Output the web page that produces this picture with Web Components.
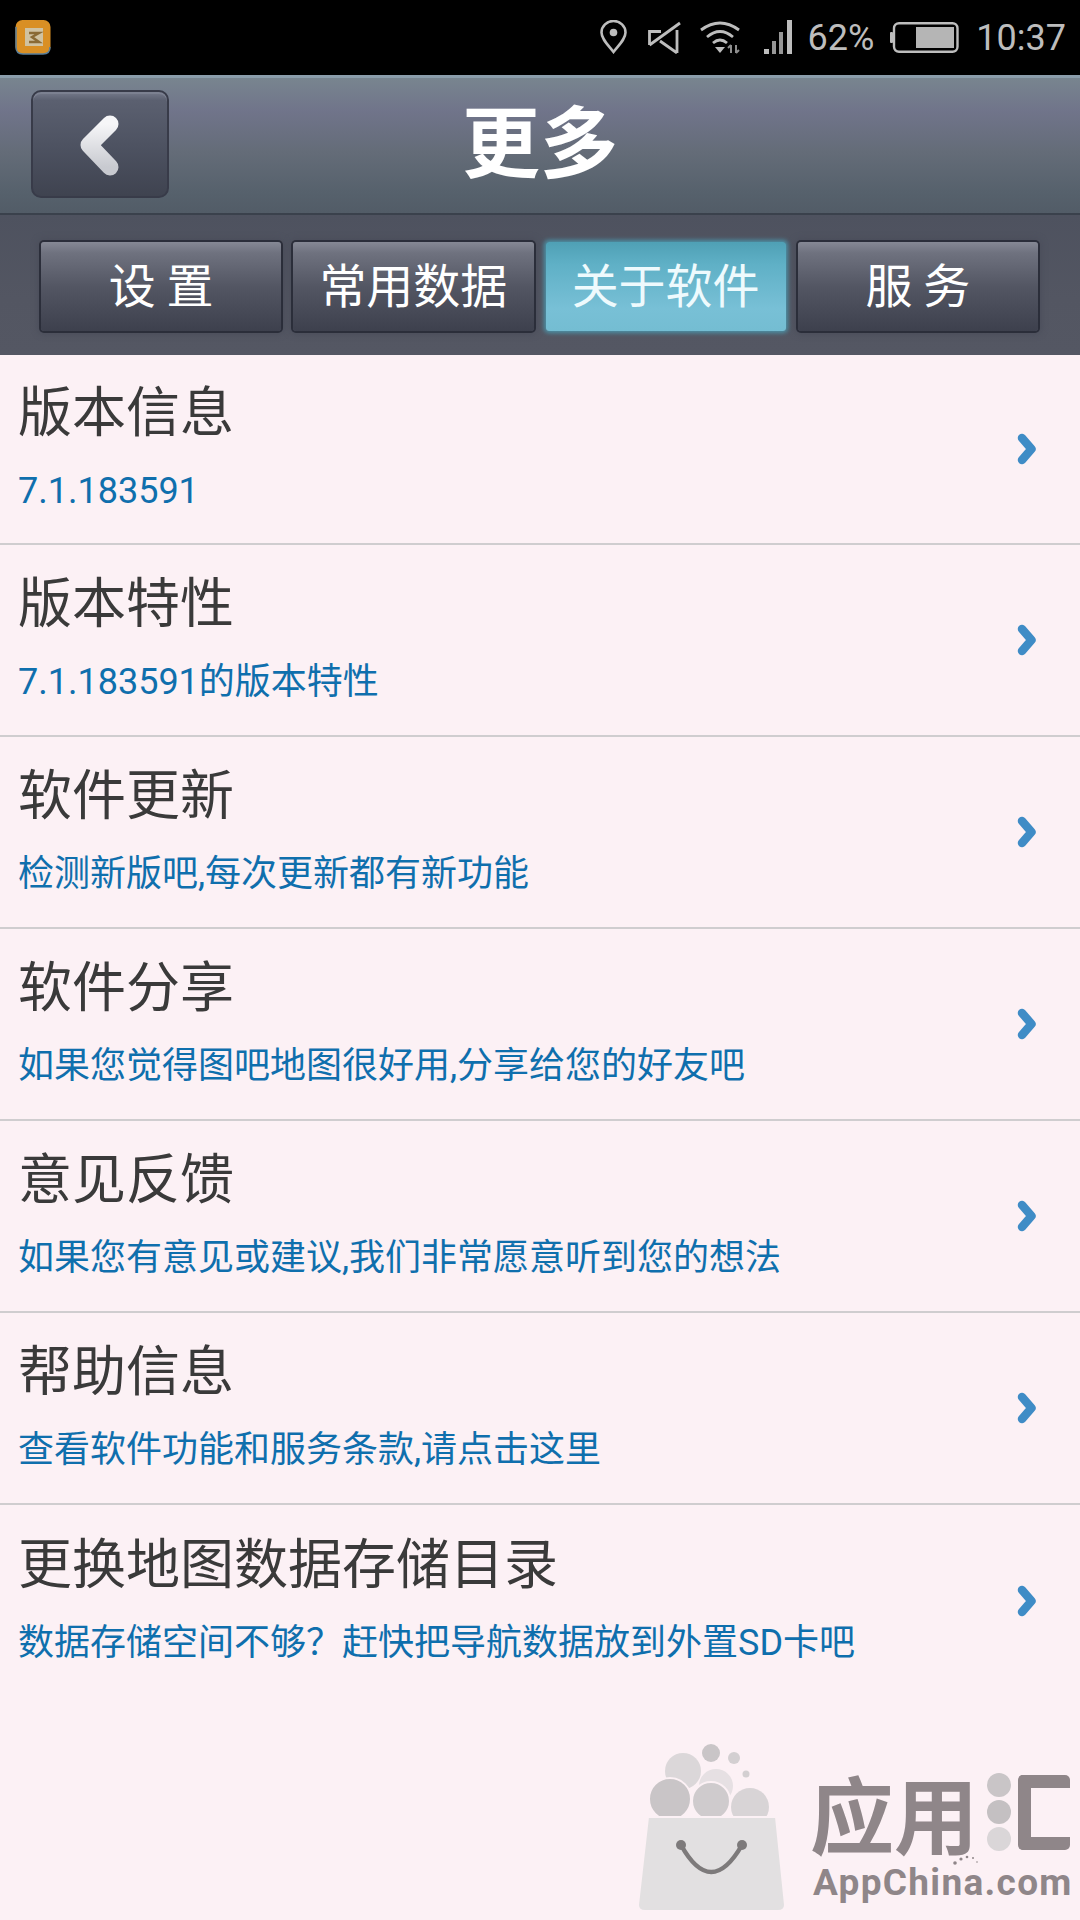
<!DOCTYPE html>
<html lang="zh">
<head>
<meta charset="utf-8">
<title>更多</title>
<style>
    html, body { margin: 0; padding: 0; background: #fcf1f5; }
    body { width: 1080px; height: 1920px; overflow: hidden; font-family: Roboto, "Noto Sans CJK SC", sans-serif; }
    more-page { display: block; }
</style>
</head>
<body>
<more-page>
    <status-bar></status-bar>
    <title-bar>更多</title-bar>
    <tab-bar>
        <tab-button>设 置</tab-button>
        <tab-button>常用数据</tab-button>
        <tab-button active>关于软件</tab-button>
        <tab-button>服 务</tab-button>
    </tab-bar>
    <more-list>
        <more-row first title="版本信息" sub="7.1.183591"></more-row>
        <more-row title="版本特性" sub="7.1.183591的版本特性"></more-row>
        <more-row title="软件更新" sub="检测新版吧,每次更新都有新功能"></more-row>
        <more-row title="软件分享" sub="如果您觉得图吧地图很好用,分享给您的好友吧"></more-row>
        <more-row title="意见反馈" sub="如果您有意见或建议,我们非常愿意听到您的想法"></more-row>
        <more-row title="帮助信息" sub="查看软件功能和服务条款,请点击这里"></more-row>
        <more-row last title="更换地图数据存储目录" sub="数据存储空间不够？赶快把导航数据放到外置SD卡吧"></more-row>
    </more-list>
    <app-watermark></app-watermark>
</more-page>

<script>
class StatusBar extends HTMLElement {
    constructor() {
        super()
        this.attachShadow({mode: 'open'})
        this.shadowRoot.innerHTML = `
            <style>
                :host { display: flex; align-items: center; height: 75px; background: #000; color: #bdbdbd; font: 36px Roboto, sans-serif; padding: 0 14px 0 15px; box-sizing: border-box; }
                svg { display: block; flex: none; margin-top: -1px; }
                .app { margin-right: auto; }
                .mute { margin-left: 21px; }
                .wifi { margin-left: 19px; }
                .signal { margin-left: 22px; }
                .pct { margin-left: 16px; }
                .batt { margin-left: 16px; }
                .time { margin-left: 17px; }
            </style>
            <svg class="app" width="36" height="36" viewBox="0 0 36 36">
                <rect x="0.5" y="1" width="35" height="34" rx="7" fill="#d98f24"/>
                <path d="M1 8v20q0 7 7 7h20q7 0 7-7" fill="none" stroke="#5a7f9a" stroke-width="1.5"/>
                <rect x="10" y="9" width="18" height="18" fill="#cfc2a2"/>
                <path d="M14 14h10l-7 4 7 5H14" fill="none" stroke="#8a6a35" stroke-width="2.5"/>
            </svg>
            <svg class="pin" width="27" height="34" viewBox="0 0 27 34" fill="none" stroke="#bdbdbd" stroke-width="2.6">
                <path d="M13.5 32C8 25 1.5 19 1.5 12.5a12 11.5 0 0 1 24 0C25.500 19 19 25 13.500 32z"/>
                <circle cx="13.500" cy="12.500" r="3.800" fill="#bdbdbd" stroke="none"/>
            </svg>
            <svg class="mute" width="33" height="34" viewBox="0 0 33 34" fill="none" stroke="#bdbdbd" stroke-width="2.8">
                <path d="M29 33V10M29 33L12 21M1.500 25V11.500H13"/>
                <path d="M1.500 25L32 3"/>
            </svg>
            <svg class="wifi" width="42" height="34" viewBox="0 0 42 34" fill="none" stroke="#bdbdbd" stroke-width="2.8">
                <path d="M1 10Q20-4 39 10"/>
                <path d="M7 17Q20 6 33 17"/>
                <path d="M13 23Q20 17 27 23"/>
                <path d="M15 27h10l-5 6z" fill="#bdbdbd" stroke="none"/>
                <path d="M31 33V25M28 28l3-3M36 25v8M36 33l3-3" stroke-width="2" opacity=".75"/>
            </svg>
            <svg class="signal" width="28" height="34" viewBox="0 0 28 34" fill="#bdbdbd">
                <rect x="0" y="29" width="5" height="5"/>
                <rect x="8" y="21" width="4" height="13" opacity=".8"/>
                <rect x="15" y="12" width="4" height="22" opacity=".8"/>
                <rect x="23" y="0" width="5" height="34"/>
            </svg>
            <span class="pct">62%</span>
            <svg class="batt" width="69" height="31" viewBox="0 0 69 31">
                <rect x="0" y="10" width="3" height="11" rx="1" fill="#bdbdbd"/>
                <rect x="4" y="1.200" width="63.500" height="28.600" rx="5" fill="none" stroke="#bdbdbd" stroke-width="2.4"/>
                <rect x="26" y="5" width="38" height="21" fill="#b5b5b5"/>
            </svg>
            <span class="time">10:37</span>
        `
    }
}

class TitleBar extends HTMLElement {
    constructor() {
        super()
        this.attachShadow({mode: 'open'})
        this.shadowRoot.innerHTML = `
            <style>
                :host { display: block; height: 140px; box-sizing: border-box; border-top: 3px solid #8b9dab; border-bottom: 2px solid #3a414c; background: linear-gradient(#78858f 0%, #70748a 25%, #646c78 55%, #56616c 85%, #525c67 100%); }
                .inner { display: flex; align-items: center; height: 100%; padding-left: 31px; }
                button { all: unset; flex: none; display: flex; align-items: center; justify-content: center; width: 138px; height: 108px; margin-top: -4px; box-sizing: border-box; border-radius: 10px; border: 2px solid #383b49; background: linear-gradient(#757a8b 0%, #5b6070 8%, #4e5362 50%, #3f4350 100%); box-shadow: inset 0 2px 0 #7c8191; }
                h1 { flex: 1; margin: -15px 0 0 0; padding-right: 169px; text-align: center; color: #fff; font: 700 78px/1 "Noto Sans CJK SC", sans-serif; }
            </style>
            <div class="inner">
                <button aria-label="back">
                    <svg width="60" height="80" viewBox="0 0 60 80">
                        <defs><linearGradient id="g" x1="0" y1="0" x2="0" y2="1"><stop offset="0" stop-color="#f6f6f8"/><stop offset="1" stop-color="#c8cad0"/></linearGradient></defs>
                        <path d="M40 20L19 41 40 63" fill="none" stroke="url(#g)" stroke-width="17" stroke-linecap="round" stroke-linejoin="round"/>
                    </svg>
                </button>
                <h1><slot></slot></h1>
            </div>
        `
    }
}

class TabBar extends HTMLElement {
    constructor() {
        super()
        this.attachShadow({mode: 'open'})
        this.shadowRoot.innerHTML = `
            <style>
                :host { display: flex; gap: 12px; height: 140px; box-sizing: border-box; padding: 27px 42px 24px 41px; background: linear-gradient(#4e525f, #535662 60%, #545763); }
            </style>
            <slot></slot>
        `
    }
}

class TabButton extends HTMLElement {
    constructor() {
        super()
        this.attachShadow({mode: 'open'})
        this.shadowRoot.innerHTML = `
            <style>
                :host { flex: 1; display: flex; align-items: center; justify-content: center; box-sizing: border-box; height: 89px; border-radius: 3px; color: #fff; font: 47px "Noto Sans CJK SC", sans-serif; background: linear-gradient(#868995 0%, #6f727f 12%, #535663 50%, #3d404d 100%); box-shadow: 0 0 0 2px #2b2e3a, 0 0 6px 3px #4a4d5a; }
                :host([active]) { color: #eefafd; background: linear-gradient(#4fa0b5 0%, #5fb0c6 25%, #78c0d6 75%, #74bdd2 100%); box-shadow: 0 0 4px 2px #4b93a8; }
                span { margin-top: -8px; }
            </style>
            <span><slot></slot></span>
        `
    }
}

class MoreList extends HTMLElement {
    constructor() {
        super()
        this.attachShadow({mode: 'open'})
        this.shadowRoot.innerHTML = `
            <style>
                :host { display: block; background: #fcf1f5; }
            </style>
            <slot></slot>
        `
    }
}

class MoreRow extends HTMLElement {
    constructor() {
        super()
        this.attachShadow({mode: 'open'})
        this.shadowRoot.innerHTML = `
            <style>
                :host { display: flex; align-items: center; height: 192px; box-sizing: border-box; border-bottom: 2px solid #cfcdcf; padding: 0 43px 0 18px; }
                :host([first]) { height: 190px; }
                :host([last]) { border-bottom: 0; }
                .text { flex: 1; min-width: 0; padding-bottom: 10px; }
                .title { color: #3a3a3a; font: 54px/64px "Noto Sans CJK SC", sans-serif; margin-top: 1px; }
                .sub { color: #0f6fad; font: 36px/44px Roboto, "Noto Sans CJK SC", sans-serif; margin-top: 28px; }
                svg { display: block; flex: none; }
            </style>
            <div class="text">
                <div class="title"></div>
                <div class="sub"></div>
            </div>
            <svg width="20" height="32" viewBox="0 0 20 32">
                <path d="M5 5L14.500 16 5 27" fill="none" stroke="#3f8cc6" stroke-width="8.500" stroke-linecap="round" stroke-linejoin="round"/>
            </svg>
        `
    }

    connectedCallback() {
        this.shadowRoot.querySelector('.title').textContent = this.getAttribute('title')
        this.shadowRoot.querySelector('.sub').textContent = this.getAttribute('sub')
    }
}

class AppWatermark extends HTMLElement {
    constructor() {
        super()
        this.attachShadow({mode: 'open'})
        this.shadowRoot.innerHTML = `
            <style>
                :host { display: flex; justify-content: flex-end; gap: 22px; padding: 47px 10px 0 0; color: #8f8689; }
                .bag { display: block; flex: none; }
                .side { width: 260px; flex: none; padding-top: 29px; }
                .cn { display: flex; align-items: center; height: 78px; }
                .han { flex: none; width: 167px; margin-top: 14px; font: 700 84px/78px "Liberation Sans", "Noto Sans CJK SC", sans-serif; white-space: nowrap; }
                .dots { margin-left: 10px; flex: none; }
                .k { margin-left: 7px; flex: none; width: 52px; height: 75px; box-sizing: border-box; border: 13px solid #8f8689; border-right: 0; border-radius: 5px; }
                .en { position: relative; font: 700 37px/40px Roboto, sans-serif; margin-top: 12px; margin-left: 3px; letter-spacing: 1.3px; white-space: nowrap; }
                .spark { position: absolute; left: 140px; top: -9px; }
            </style>
            <svg class="bag" width="150" height="168" viewBox="0 0 150 168">
                <circle cx="73" cy="9" r="9" fill="#c9c5c7"/>
                <circle cx="96" cy="14" r="6" fill="#d3cfd1"/>
                <circle cx="108" cy="30" r="3.500" fill="#d3cfd1"/>
                <circle cx="45" cy="27" r="18" fill="#dbd7d9"/>
                <circle cx="78" cy="42" r="17" fill="#e6e0e3"/>
                <circle cx="32" cy="55" r="21" fill="#c9c5c7" stroke="#fcf1f5" stroke-width="2"/>
                <circle cx="73" cy="57" r="19" fill="#cfcbcd" stroke="#fcf1f5" stroke-width="2"/>
                <circle cx="112" cy="63" r="19" fill="#d8d4d6"/>
                <path d="M10 73h128l9 88q0 6-7 6H7q-7 0-7-6z" fill="#e2e0e1" stroke="#fcf1f5" stroke-width="2"/>
                <path d="M43 101Q73 155 104 101" fill="none" stroke="#7d7a7b" stroke-width="4.500"/>
                <circle cx="43" cy="101" r="5" fill="#7d7a7b"/>
                <circle cx="104" cy="101" r="5" fill="#7d7a7b"/>
            </svg>
            <div class="side">
                <div class="cn">
                    <span class="han">应用</span>
                    <svg class="dots" width="24" height="78" viewBox="0 0 24 78"><circle cx="12" cy="12" r="12" fill="#c9c5c7"/><circle cx="12" cy="39" r="12" fill="#c4c0c2"/><circle cx="12" cy="66" r="12" fill="#dad6d8"/></svg>
                    <div class="k"></div>
                </div>
                <div class="en">AppChina.com
                    <svg class="spark" width="26" height="12" viewBox="0 0 26 12" fill="#8f8689"><circle cx="2" cy="9" r="1.800"/><circle cx="8" cy="5" r="1.600"/><circle cx="14" cy="3" r="1.300"/><circle cx="20" cy="4" r="1"/><circle cx="24" cy="8" r=".8"/></svg>
                </div>
            </div>
        `
    }
}

customElements.define('status-bar', StatusBar)
customElements.define('title-bar', TitleBar)
customElements.define('tab-bar', TabBar)
customElements.define('tab-button', TabButton)
customElements.define('more-list', MoreList)
customElements.define('more-row', MoreRow)
customElements.define('app-watermark', AppWatermark)
</script>
</body>
</html>
